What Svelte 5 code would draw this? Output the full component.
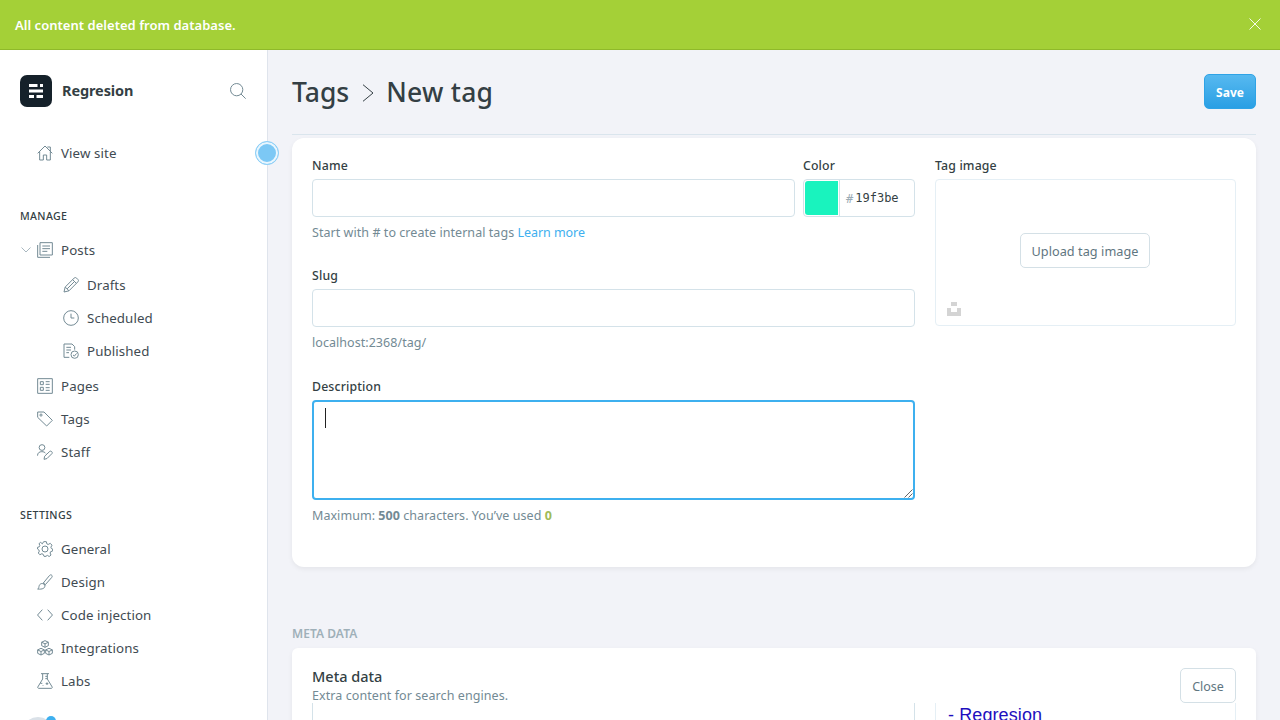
<script>
  const icons = {
    house: ['M1 12.5 12 1.5l11 11', 'M4 9.8V22.5h5.5V15h5v7.5H20V9.8', 'M15.5 3h4.5v6'],
    posts: ['M4.5 1h18.500v18.500H4.500z', 'M1 4.500V23h18.500', 'M8 6h11.500M8 10h11.500M8 14h7.500'],
    drafts: ['M1.5 22.5 3.3 15 16.7 1.7a2.6 2.6 0 0 1 3.7 0l1.9 1.9a2.6 2.6 0 0 1 0 3.7L9 20.7z', 'M3.3 15 9 20.7M14.5 4l5.5 5.5M6.2 17.8 17.3 6.7'],
    scheduled: ['M12 1a11 11 0 1 1 0 22a11 11 0 1 1 0-22', 'M12 5.5V12h5'],
    published: ['M9.5 21.5H1.5v-20h12l4 4V10', 'M5 6.5h7M5 10.5h7M5 14.5h4', 'M17.5 12a5.5 5.5 0 1 1 0 11a5.5 5.5 0 1 1 0-11', 'm15 17.8 2 1.9 3.3-4'],
    pages: ['M1 1h22v22H1z', 'M5 5.5h4.5V10H5zM5 14h4.5v4.5H5z', 'M13 5.5h6M13 9.5h6M13 14.5h6M13 18.5h6'],
    tags: ['M1 1.5h9.5L23 14l-8.500 8.500L1 9.500z', 'M6 4.500a1.600 1.600 0 1 1 0 3.200a1.600 1.600 0 1 1 0-3.200'],
    staff: ['M7.5 1a4.3 4.3 0 1 1 0 8.6a4.3 4.3 0 1 1 0-8.6', 'M.8 17.5C.8 13.3 3.5 11.5 7.3 11.5c2.500 0 4.500.8 5.700 2.500', 'm10.500 23 1-4.700 7.700-7.300c1.700-1.500 4.800 1.500 3.300 3.300L15 21.800z'],
    general: ['M12 7.500a4.500 4.500 0 1 1 0 9a4.500 4.500 0 1 1 0-9', 'M10 1h4l.8 3.300 2 .9 3.100-1.700 2.600 2.800-1.700 3 .8 2 1.900.7v3l-3 1-.9 2 1.400 3-2.700 2.300-2.600-1.700-2 .9L13.500 23h-3l-1.200-3-2-.9-3 1.500L2 18l1.500-2.800-.9-2L.8 12V9.500l2.600-.8.9-2L3 4l2.500-2L8 4.300z'],
    design: ['M9.500 13.500 18.800 2.200c2.200-2.500 5.400.4 3.300 3L12.500 16z', 'M1 22.500c2-.5 1.500-3 2.500-5.500 1.500-3.500 6.500-3.700 8 0 1.500 4-3.500 6.500-10.500 5.500z', 'M9.500 13.500 12.800 17'],
    code: ['M8 4 .8 12 8 20M16 4l7.200 8L16 20'],
    integrations: ['m12 1 5 2.300v5.200l-5 2.500-5-2.500V3.300zM7 3.300l5 2.500 5-2.500M12 5.800V11', 'm6 12.500 5 2.300V20l-5 2.500L1 20v-5.200zM1 14.800l5 2.500 5-2.500M6 17.300v5.200', 'm18 12.500 5 2.300V20l-5 2.500-5-2.500v-5.200zM13 14.800l5 2.500 5-2.500M18 17.300v5.200'],
    labs: ['M6 1h12M8.500 1v8L1.200 21c-.4 1 .1 2 1.300 2h19c1.200 0 1.700-1 1.300-2L15.500 9V1', 'M5 15.500h3M12.500 5h3M12.500 8.500h3M15 14v4M13 16h4M9 18.500v1']
  };

  const manage = [
    { label: 'Drafts', icon: 'drafts' },
    { label: 'Scheduled', icon: 'scheduled' },
    { label: 'Published', icon: 'published' }
  ];
  const content = [
    { label: 'Pages', icon: 'pages' },
    { label: 'Tags', icon: 'tags' },
    { label: 'Staff', icon: 'staff' }
  ];
  const settings = [
    { label: 'General', icon: 'general' },
    { label: 'Design', icon: 'design' },
    { label: 'Code injection', icon: 'code' },
    { label: 'Integrations', icon: 'integrations' },
    { label: 'Labs', icon: 'labs' }
  ];
</script>

{#snippet icon(name)}
  <svg class="icon" viewBox="0 0 24 24">
    {#each icons[name] as d}<path {d} />{/each}
  </svg>
{/snippet}

{#snippet item(entry)}
  <div class="item">{@render icon(entry.icon)}<span>{entry.label}</span></div>
{/snippet}

<div class="app">
  <div class="alert">
    <span>All content deleted from database.</span>
    <svg viewBox="0 0 12 12"><path d="M.5.5l11 11M11.500.5l-11 11" /></svg>
  </div>

  <div class="body">
    <nav class="sidebar">
      <div class="brand">
        <svg class="logo" viewBox="0 0 32 32">
          <rect width="32" height="32" rx="7" fill="#15212a" />
          <path fill="#fff" d="M9 9h8.500v3H9zM20 9h3v3h-3zM9 14.500h14v3H9zM9 20h5v3H9zM16.500 20H23v3h-6.500z" />
        </svg>
        <span class="name">Regresion</span>
        <svg class="search" viewBox="0 0 24 24"><circle cx="10" cy="10" r="9.200" /><path d="m16.500 16.500 7 7" /></svg>
      </div>
      <div class="site">
        {@render item({ label: 'View site', icon: 'house' })}
        <i class="beacon"></i>
      </div>

      <h5>MANAGE</h5>
      <div class="group">
        <div class="posts">
          <svg class="caret" viewBox="0 0 10 6"><path d="M.5.5 5 5 9.500.5" /></svg>
          {@render item({ label: 'Posts', icon: 'posts' })}
        </div>
        <div class="sub">{#each manage as m}{@render item(m)}{/each}</div>
        {#each content as m}{@render item(m)}{/each}
      </div>

      <h5>SETTINGS</h5>
      <div class="group">{#each settings as m}{@render item(m)}{/each}</div>
      <div class="user"><i class="avatar"></i><i class="dot"></i></div>
    </nav>

    <main>
      <header>
        <h2>
          <span class="crumb">Tags</span>
          <svg viewBox="0 0 12 18"><path d="M1 .7 11 9 1 17.300" /></svg>
          <span class="current">New tag</span>
        </h2>
        <button class="save">Save</button>
      </header>

      <section class="card first">
        <div class="fields">
          <div class="row">
            <div class="grow"><b class="label">Name</b><div class="input"></div></div>
            <div class="colour">
              <b class="label">Color</b>
              <div class="input picker"><i class="swatch"></i><span class="hash">#</span><span class="hex">19f3be</span></div>
            </div>
          </div>
          <p class="hint name-hint">Start with # to create internal tags <span class="link">Learn more</span></p>
          <b class="label">Slug</b>
          <div class="input"></div>
          <p class="hint slug-hint">localhost:2368/tag/</p>
          <b class="label">Description</b>
          <div class="area">
            <i class="caretbar"></i>
            <svg class="grip" viewBox="0 0 9 9"><path d="M.5 8.500l8-8M4.500 8.500l4-4" /></svg>
          </div>
          <p class="hint">Maximum: <b>500</b> characters. You’ve used <b class="ok">0</b></p>
        </div>
        <div class="image">
          <b class="label">Tag image</b>
          <div class="drop">
            <button class="plain upload">Upload tag image</button>
            <svg class="unsplash" viewBox="0 0 14 14"><path d="M4 0h6v4H4zM0 6h4v4h6V6h4v8H0z" /></svg>
          </div>
        </div>
      </section>

      <h4>META DATA</h4>
      <section class="card meta">
        <div class="metahead">
          <div><h3>Meta data</h3><p>Extra content for search engines.</p></div>
          <button class="plain close">Close</button>
        </div>
        <div class="metabody">
          <div class="cut"></div>
          <div class="preview">- Regresion</div>
        </div>
      </section>
    </main>
  </div>
</div>

<style>
  :global(body) { margin: 0; overflow: hidden; }
  * { box-sizing: border-box; }
  .app { width: 1280px; height: 720px; overflow: hidden; display: flex; flex-direction: column; font-family: "Noto Sans", sans-serif; background: #f2f3f8; color: #343f44; font-size: 13px; }
  svg { fill: none; flex: none; display: block; }
  i { display: block; }
  .alert { flex: none; height: 50px; display: flex; align-items: center; justify-content: space-between; padding: 0 19px 1px 15px; background: #a4d037; border-bottom: 1px solid #8fb92a; color: #fff; font-weight: 600; font-size: 13px; letter-spacing: .03px; }
  .alert span { padding-top: 2px; }
  .alert svg { width: 12px; height: 12px; stroke: #fff; stroke-width: .9; }
  .body { flex: 1; min-height: 0; display: flex; }

  .sidebar { flex: none; width: 268px; background: #fff; border-right: 1px solid #dfe4ec; }
  .brand { display: flex; align-items: center; margin-top: 25px; padding: 0 21px 0 20px; height: 32px; }
  .logo { width: 32px; height: 32px; }
  .name { flex: 1; margin-left: 10px; padding-bottom: 2px; font-size: 14.500px; font-weight: 700; letter-spacing: -.1px; }
  .search { width: 16px; height: 16px; stroke: #738a94; stroke-width: 1.500; }
  .site { position: relative; margin-top: 29px; }
  .beacon { position: absolute; left: 255px; top: 5px; width: 24px; height: 24px; border-radius: 50%; border: 1.500px solid #8fd0f7; background: #7cc8f5; box-shadow: inset 0 0 0 2px #e9f6fe; }
  .item { display: flex; align-items: center; height: 33px; padding-left: 37px; font-size: 13.300px; letter-spacing: .1px; color: #3f4b52; }
  .item span { margin-left: 8px; white-space: nowrap; }
  .icon { width: 16px; height: 16px; stroke: #738a94; stroke-width: 1.500; stroke-linejoin: round; }
  h5 { margin: 39px 0 0 20px; height: 17px; line-height: 17px; font-size: 10.600px; font-weight: 500; letter-spacing: .35px; }
  .group { margin-top: 8px; }
  .group + h5 { margin-top: 39px; }
  .posts { position: relative; }
  .caret { position: absolute; left: 21px; top: 14px; width: 10px; height: 6px; stroke: #a9b8c0; stroke-width: 1; }
  .sub { padding: 2px 0 2px 26px; }
  .user { position: relative; margin-top: 20px; height: 30px; }
  .avatar { position: absolute; left: 22px; top: 0; width: 32px; height: 32px; border-radius: 50%; background: #dae1e8; }
  .dot { position: absolute; left: 46px; top: -1px; width: 10px; height: 10px; border-radius: 50%; background: #3eb0ef; }

  main { flex: 1; padding: 0 24px; min-width: 0; overflow: hidden; }
  header { display: flex; align-items: center; justify-content: space-between; height: 85px; border-bottom: 1px solid #dae5ed; }
  h2 { display: flex; align-items: center; margin: 0; font-size: 26.500px; font-weight: 500; line-height: 34px; }
  h2 svg { width: 12px; height: 18px; margin: 2px 12px 0 13px; stroke: #343f44; stroke-width: 1; }
  .current { letter-spacing: .25px; }
  button { font-family: inherit; height: 35px; padding: 1px 0 0; border-radius: 5px; }
  .save { width: 52px; border: 1px solid #2fa3e6; background: linear-gradient(#57b9f0, #2a9fe4); color: #fff; font-size: 12px; font-weight: 700; margin-top: -1px; padding-top: 2px; }
  .plain { border: 1px solid #d4e0e6; background: #fff; color: #5f7681; font-size: 12.700px; }

  .card { background: #fff; box-shadow: 0 2px 5px rgba(0, 0, 0, .06); }
  .first { display: flex; justify-content: space-between; margin-top: 3px; height: 429px; padding: 18px 20px 0; border-radius: 12px; }
  .fields { width: 603px; }
  .row { display: flex; gap: 8px; }
  .grow { flex: 1; }
  .colour { width: 112px; }
  .label { display: block; height: 20px; line-height: 20px; margin-bottom: 3px; font-size: 12.300px; font-weight: 500; letter-spacing: .15px; }
  .input { height: 38px; border: 1px solid #d4e2e9; border-radius: 4px; }
  .picker { display: flex; align-items: center; padding: 1px; font: 12px "DejaVu Sans Mono", monospace; }
  .swatch { width: 33px; height: 34px; background: #19f3be; border-radius: 3px 0 0 3px; margin-right: 1px; }
  .hash { border-left: 1px solid #d4e2e9; height: 36px; line-height: 38px; padding-left: 6px; color: #9aabb5; }
  .hex { margin-left: 2px; line-height: 38px; }
  .hint { margin: 6px 0 0; height: 20px; line-height: 20px; font-size: 12.500px; letter-spacing: .05px; color: #738a94; white-space: nowrap; }
  .link { color: #3eb0ef; letter-spacing: -.05px; }
  .name-hint { margin-bottom: 23px; }
  .slug-hint { margin-bottom: 24px; }
  .ok { color: #9fbb58; }
  .area { position: relative; height: 100px; border: 2px solid #3eb0ef; border-radius: 4px; }
  .caretbar { position: absolute; left: 11px; top: 6px; width: 1px; height: 20px; background: #222; }
  .grip { position: absolute; right: 0; bottom: 0; width: 9px; height: 9px; stroke: #555; stroke-width: .9; }
  .image { width: 301px; }
  .drop { position: relative; display: flex; align-items: center; justify-content: center; height: 147px; border: 1px solid #e5eff5; border-radius: 4px; padding: 0 1px 4px 0; }
  .upload { width: 130px; letter-spacing: .05px; }
  .unsplash { position: absolute; left: 11px; bottom: 9px; width: 14px; height: 14px; fill: #d4d4d4; }

  h4 { margin: 57px 0 0; height: 20px; line-height: 20px; font-size: 12px; font-weight: 600; color: #9fb0b9; letter-spacing: .05px; }
  .meta { margin-top: 4px; height: 200px; padding: 20px 20px 0; border-radius: 6px; }
  .metahead { display: flex; justify-content: space-between; height: 35px; }
  h3 { margin: -2px 0 0; height: 20px; line-height: 20px; font-size: 14.500px; font-weight: 500; }
  .metahead p { margin: 1px 0 0; line-height: 18px; font-size: 12.500px; letter-spacing: .08px; color: #738a94; }
  .close { width: 56px; font-size: 12.500px; padding-top: 2px; }
  .metabody { display: flex; justify-content: space-between; }
  .cut { width: 603px; height: 60px; border: solid #d4e2e9; border-width: 0 1px; }
  .preview { width: 301px; height: 60px; border: solid #e5eff5; border-width: 0 1px; padding: 1px 12px; font: 18px/22px "Liberation Sans", Arial, sans-serif; letter-spacing: .1px; color: #1e0fbe; }
</style>
